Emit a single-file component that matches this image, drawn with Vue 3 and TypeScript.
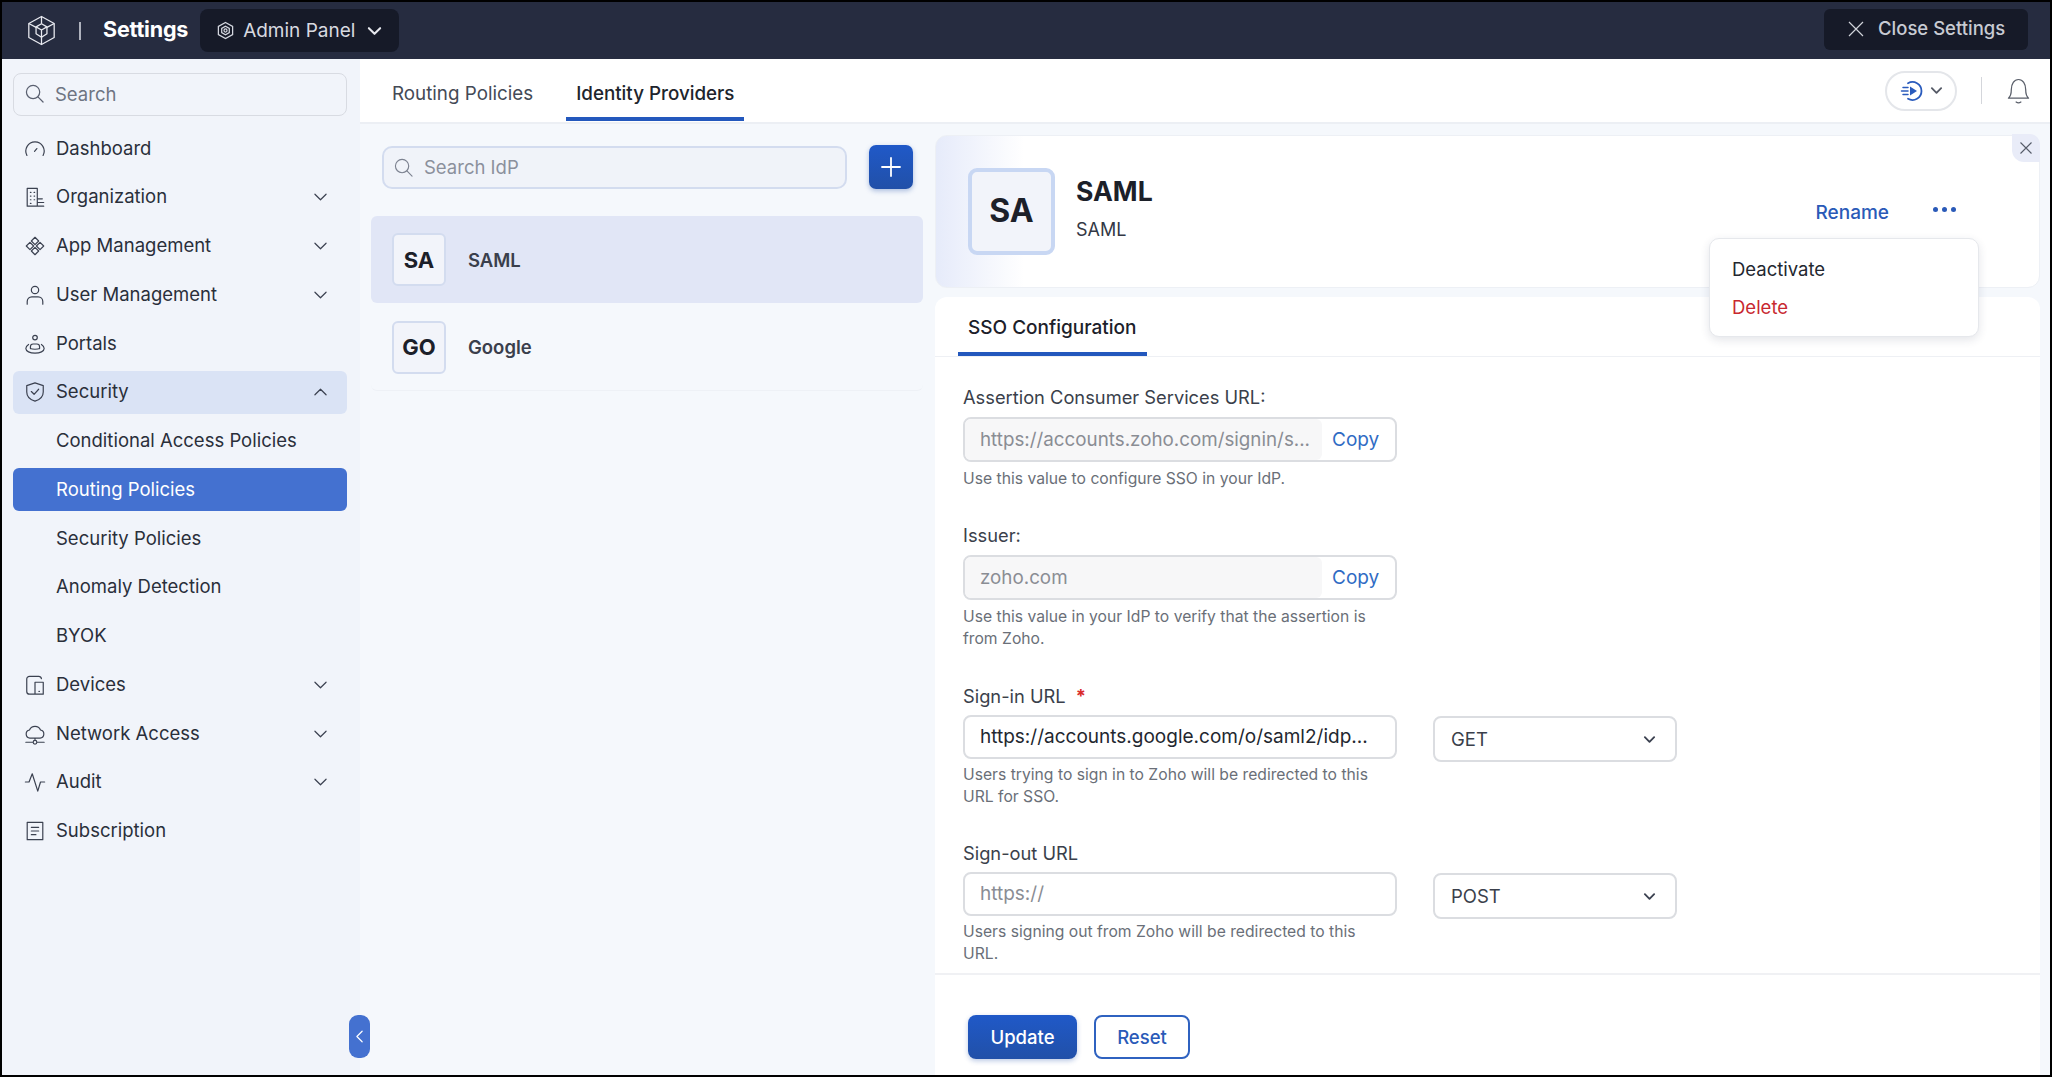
<template>
  <div class="frame">
    <header class="topbar">
      <svg class="logo" viewBox="0 0 32 34" fill="none" stroke="#e8eaf0" stroke-width="1.4" stroke-linejoin="round">
        <path d="M16 1.5 30 9.3V24.7L16 32.5 2 24.7V9.3Z" />
        <path d="M2 9.3 10 13.5M30 9.3 22 13.5M16 32.5V24.500M16 1.5V9.500" />
        <path d="M16 9.500 22 13V20.500L16 24.500 10 20.500V13Z" />
        <path d="M10 13 16 16.500 22 13M16 16.500V24.500" />
      </svg>
      <span class="bar-divider"></span>
      <span class="bar-title">Settings</span>
      <button class="admin-btn">
        <svg class="admin-icon" viewBox="0 0 20 20" fill="none" stroke="#d5d8e0" stroke-width="1.3">
          <path d="M10 1.5 17.5 5.7V14.3L10 18.5 2.5 14.3V5.7Z" />
          <path d="M10 5.500 14 7.800V12.200L10 14.500 6 12.200V7.800Z" />
          <circle cx="10" cy="10" r="1.600" />
        </svg>
        <span>Admin Panel</span>
        <svg class="admin-chev" viewBox="0 0 16 10" fill="none" stroke="#e6e8ee" stroke-width="2.2" stroke-linecap="round" stroke-linejoin="round">
          <path d="M2 2 8 8 14 2" />
        </svg>
      </button>
      <button class="close-btn">
        <svg viewBox="0 0 16 16" fill="none" stroke="#d0d3da" stroke-width="1.2"><path d="M1 1 15 15M15 1 1 15" /></svg>
        <span>Close Settings</span>
      </button>
    </header>

    <div class="body">
      <aside class="sidebar">
        <div class="side-search">
          <svg class="search-icon" viewBox="0 0 20 20" fill="none" stroke="#5a6070" stroke-width="1.3" stroke-linecap="round">
            <circle cx="8.5" cy="8.5" r="7" /><path d="M13.6 13.6 19 19" />
          </svg>
          <span>Search</span>
        </div>
        <nav class="nav">
          <div v-for="item in navItems" :key="item.label" class="nav-item" :class="{ open: item.open, active: item.active }">
            <svg v-if="item.icon" class="nav-icon" viewBox="0 0 24 24" fill="none" stroke="#3b4150" stroke-width="1.3" stroke-linecap="round" stroke-linejoin="round">
              <path :d="item.icon" />
            </svg>
            <span class="nav-label" :class="{ sub: !item.icon }">{{ item.label }}</span>
            <svg v-if="item.chevron" class="nav-chev" viewBox="0 0 14 8" fill="none" stroke="#3b4150" stroke-width="1.3" stroke-linecap="round" stroke-linejoin="round">
              <path :d="item.open ? 'M1 7 7 1 13 7' : 'M1 1 7 7 13 1'" />
            </svg>
          </div>
        </nav>
      </aside>
      <button class="collapse">
        <svg viewBox="0 0 8 14" fill="none" stroke="#fff" stroke-width="1.4" stroke-linecap="round" stroke-linejoin="round"><path d="M7 1 1 7 7 13" /></svg>
      </button>

      <main class="main">
        <div class="tabbar">
          <span class="tab">Routing Policies</span>
          <span class="tab current">Identity Providers</span>
          <div class="tab-tools">
            <div class="pill">
              <svg class="pill-play" viewBox="0 0 24 24" fill="none" stroke="#2a5bbd" stroke-width="1.8" stroke-linecap="round">
                <path d="M8 4.2A9 9 0 1 1 8 19.8" />
                <path d="M10 7.5 17 12 10 16.5Z" fill="#2a5bbd" stroke="none" />
                <path d="M3 8.5H8M1.5 12H8M3 15.5H8" stroke-width="1.5" />
              </svg>
              <svg class="pill-chev" viewBox="0 0 14 9" fill="none" stroke="#555a66" stroke-width="2" stroke-linecap="round" stroke-linejoin="round"><path d="M2 2 7 7 12 2" /></svg>
            </div>
            <span class="tool-divider"></span>
            <svg class="bell" viewBox="0 0 24 27" fill="none" stroke="#5a5f6a" stroke-width="1.3" stroke-linecap="round" stroke-linejoin="round">
              <path d="M1.5 21C4 19 4.5 17 4.5 12 4.5 6 7.5 1.5 12 1.5S19.5 6 19.5 12C19.5 17 20 19 22.5 21Z" />
              <path d="M9.5 25C11 26 13 26 14.5 25" />
            </svg>
          </div>
        </div>

        <div class="columns">
          <section class="idp-list">
            <div class="idp-tools">
              <div class="idp-search">
                <svg class="search-icon" viewBox="0 0 20 20" fill="none" stroke="#7c8290" stroke-width="1.2" stroke-linecap="round">
                  <circle cx="8.5" cy="8.5" r="7" /><path d="M13.6 13.6 19 19" />
                </svg>
                <span>Search IdP</span>
              </div>
              <button class="add-btn">
                <svg viewBox="0 0 20 20" fill="none" stroke="#fff" stroke-width="1.8" stroke-linecap="round"><path d="M10 1V19M1 10H19" /></svg>
              </button>
            </div>
            <div v-for="idp in idps" :key="idp.name" class="idp-row" :class="{ selected: idp.selected }">
              <span class="idp-badge">{{ idp.short }}</span>
              <span class="idp-name">{{ idp.name }}</span>
            </div>
          </section>

          <section class="detail">
            <div class="detail-head">
              <span class="big-badge">SA</span>
              <div class="head-text">
                <div class="head-title">SAML</div>
                <div class="head-sub">SAML</div>
              </div>
              <span class="rename">Rename</span>
              <span class="dots"><i></i><i></i><i></i></span>
              <button class="head-close">
                <svg viewBox="0 0 12 12" fill="none" stroke="#555b68" stroke-width="1.1"><path d="M0.5 0.5 11.5 11.5M11.5 0.5 0.5 11.5" /></svg>
              </button>
              <div class="menu">
                <div class="menu-item">Deactivate</div>
                <div class="menu-item danger">Delete</div>
              </div>
            </div>

            <div class="detail-card">
              <div class="card-tabs"><span class="card-tab">SSO Configuration</span></div>
              <div class="form">
                <div class="field f-acs">
                  <label>Assertion Consumer Services URL:</label>
                  <div class="ro-input">
                    <span class="ro-value">https://accounts.zoho.com/signin/s...</span>
                    <span class="copy">Copy</span>
                  </div>
                  <p class="help">Use this value to configure SSO in your IdP.</p>
                </div>
                <div class="field f-issuer">
                  <label>Issuer:</label>
                  <div class="ro-input">
                    <span class="ro-value">zoho.com</span>
                    <span class="copy">Copy</span>
                  </div>
                  <p class="help">Use this value in your IdP to verify that the assertion is from Zoho.</p>
                </div>
                <div class="field f-signin">
                  <label>Sign-in URL <em>*</em></label>
                  <div class="input-row">
                    <div class="text-input">https://accounts.google.com/o/saml2/idp...</div>
                    <div class="select">
                      <span>GET</span>
                      <svg viewBox="0 0 14 9" fill="none" stroke="#3b4150" stroke-width="2" stroke-linecap="round" stroke-linejoin="round"><path d="M2 2 7 7 12 2" /></svg>
                    </div>
                  </div>
                  <p class="help">Users trying to sign in to Zoho will be redirected to this URL for SSO.</p>
                </div>
                <div class="field f-signout">
                  <label>Sign-out URL</label>
                  <div class="input-row">
                    <div class="text-input empty">https://</div>
                    <div class="select">
                      <span>POST</span>
                      <svg viewBox="0 0 14 9" fill="none" stroke="#3b4150" stroke-width="2" stroke-linecap="round" stroke-linejoin="round"><path d="M2 2 7 7 12 2" /></svg>
                    </div>
                  </div>
                  <p class="help">Users signing out from Zoho will be redirected to this URL.</p>
                </div>
              </div>
              <div class="form-actions">
                <button class="btn-primary">Update</button>
                <button class="btn-ghost">Reset</button>
              </div>
            </div>
          </section>
        </div>
      </main>
    </div>
  </div>
</template>

<script setup lang="ts">
interface NavItem {
  label: string
  icon?: string
  chevron?: boolean
  open?: boolean
  active?: boolean
}

const navItems: NavItem[] = [
  { label: 'Dashboard', icon: 'M3.2 19A10 10 0 1 1 20.8 19M11.5 14.5 14 11.5' },
  { label: 'Organization', icon: 'M3.5 22V2.5H14.5V22ZM7 7H7.6M11 7H11.6M7 11H7.6M11 11H11.6M7 15H7.6M11 15H11.6M7 19H7.6M14.5 14H20M14.5 18H21.5M3.5 22H21.5', chevron: true },
  { label: 'App Management', icon: 'M12 2.5 16 6.5 12 10.5 8 6.5ZM12 13.5 16 17.5 12 21.5 8 17.5ZM6.5 8 10.5 12 6.5 16 2.5 12ZM17.5 8 21.5 12 17.5 16 13.5 12Z', chevron: true },
  { label: 'User Management', icon: 'M12 2.5A4 4 0 1 1 12 10.5 4 4 0 1 1 12 2.5ZM3.5 22V19A5 5 0 0 1 8.5 14H15.5A5 5 0 0 1 20.5 19V22', chevron: true },
  { label: 'Portals', icon: 'M12 2.5A2.5 2.5 0 1 1 12 7.5 2.5 2.5 0 1 1 12 2.5ZM7 17V15A3 3 0 0 1 10 12H14A3 3 0 0 1 17 15V17M5 12.5C2.5 14 2 15.5 2 17 2 20 6.5 22 12 22S22 20 22 17C22 15.5 21.5 14 19 12.5M7 17C9 18 15 18 17 17' },
  { label: 'Security', icon: 'M12 2 21 5V12C21 17 17 20.5 12 22 7 20.5 3 17 3 12V5ZM8 11.5 11 14.5 16 9', chevron: true, open: true },
  { label: 'Conditional Access Policies' },
  { label: 'Routing Policies', active: true },
  { label: 'Security Policies' },
  { label: 'Anomaly Detection' },
  { label: 'BYOK' },
  { label: 'Devices', icon: 'M16 2.5H6A3 3 0 0 0 3 5.5V19A3 3 0 0 0 6 22H21V9H12V22M16 2.5A3 3 0 0 1 19 5M16.3 19H16.8', chevron: true },
  { label: 'Network Access', icon: 'M6.5 16.5A4.5 4.5 0 0 1 6 7.6 6.5 6.5 0 0 1 18 7.6 4.5 4.5 0 0 1 17.5 16.5ZM12 16.5V19M2 21H10M14 21H22M10 21A2 2 0 0 0 14 21 2 2 0 0 0 10 21', chevron: true },
  { label: 'Audit', icon: 'M1.5 12H5.5L9 3 15 22 18 12H22.5', chevron: true },
  { label: 'Subscription', icon: 'M3.5 2.5H20.5V21.5H3.5ZM8 8H16M8 12H16M8 16H13' }
]

const idps = [
  { short: 'SA', name: 'SAML', selected: true },
  { short: 'GO', name: 'Google', selected: false }
]
</script>

<style>
html,
body {
  margin: 0;
  background: #000;
}
</style>

<style scoped>
.frame {
  width: 2052px;
  height: 1077px;
  box-sizing: border-box;
  padding: 2px;
  background: #000;
  display: flex;
  flex-direction: column;
  font-family: Inter, "Noto Sans", sans-serif;
  color: #23272f;
  overflow: hidden;
}

button {
  font-family: inherit;
  border: none;
  padding: 0;
  cursor: pointer;
}

/* top bar */
.topbar {
  height: 57px;
  flex: none;
  background: #262c40;
  display: flex;
  align-items: center;
  padding-left: 25px;
  padding-right: 22px;
}

.logo {
  width: 29px;
  height: 31px;
}

.bar-divider {
  width: 2px;
  height: 18px;
  background: #aeb2bd;
  margin-left: 23px;
}

.bar-title {
  margin-left: 22px;
  margin-top: -3px;
  color: #fff;
  font-size: 21.5px;
  font-weight: 700;
  letter-spacing: -0.2px;
}

.admin-btn {
  margin-left: 12px;
  width: 199px;
  height: 43px;
  background: #161a28;
  border-radius: 8px;
  color: #d8dae0;
  font-size: 19px;
  display: flex;
  align-items: center;
  padding-left: 16px;
}

.admin-icon {
  width: 19px;
  height: 19px;
  margin-right: 8px;
}

.admin-chev {
  width: 15px;
  height: 10px;
  margin-left: 12px;
}

.close-btn {
  margin-left: auto;
  width: 204px;
  height: 41px;
  background: #161a28;
  border-radius: 6px;
  color: #c8cbd3;
  font-size: 18.5px;
  font-weight: 500;
  display: flex;
  align-items: center;
  padding-left: 24px;
  padding-bottom: 3px;
  box-sizing: border-box;
  gap: 14px;
  margin-top: -3px;
}

.close-btn svg {
  width: 16px;
  height: 16px;
  margin-top: 2px;
}

.body {
  flex: 1;
  display: flex;
  min-height: 0;
  position: relative;
}

/* sidebar */
.sidebar {
  width: 358px;
  flex: none;
  background: #f1f4fa;
  box-sizing: border-box;
  padding: 14px 13px 0 11px;
}

.side-search {
  height: 43px;
  box-sizing: border-box;
  border: 1px solid #d8dbe2;
  border-radius: 8px;
  display: flex;
  align-items: center;
  padding-left: 11px;
  padding-bottom: 2px;
  color: #6e7482;
  font-size: 18.5px;
}

.search-icon {
  width: 19px;
  height: 19px;
  flex: none;
  margin-right: 11px;
}

.nav {
  margin-top: 11px;
  display: flex;
  flex-direction: column;
  gap: 5.75px;
}

.nav-item {
  height: 43px;
  border-radius: 6px;
  display: flex;
  align-items: center;
  padding-left: 11px;
  font-size: 18.5px;
  color: #2a2f3a;
}

.nav-item.open {
  background: #dae3f5;
}

.nav-item.active {
  background: #4471d0;
  color: #fff;
}

.nav-icon {
  width: 22px;
  height: 22px;
  flex: none;
  margin-right: 10px;
}

.nav-label {
  margin-top: -2px;
}

.nav-label.sub {
  margin-left: 32px;
}

.nav-chev {
  width: 13px;
  height: 8px;
  margin-left: auto;
  margin-right: 20px;
}

.collapse {
  position: absolute;
  left: 347px;
  top: 956px;
  width: 21px;
  height: 43px;
  border-radius: 9px;
  background: #4471d0;
  display: flex;
  align-items: center;
  justify-content: center;
}

.collapse svg {
  width: 7px;
  height: 13px;
}

/* main */
.main {
  flex: 1;
  min-width: 0;
  display: flex;
  flex-direction: column;
}

.tabbar {
  height: 65px;
  flex: none;
  box-sizing: border-box;
  background: #fff;
  border-bottom: 2px solid #eceff4;
  display: flex;
  padding-left: 22px;
}

.tab {
  height: 62px;
  box-sizing: border-box;
  padding: 6px 10px 0;
  margin-right: 23px;
  display: flex;
  align-items: center;
  font-size: 18.8px;
  color: #444a56;
}

.tab.current {
  color: #20242c;
  font-weight: 500;
  border-bottom: 4px solid #2358bd;
  padding-top: 10px;
}

.tab-tools {
  margin-left: auto;
  display: flex;
  align-items: center;
  padding-right: 20px;
}

.pill {
  width: 72px;
  height: 40px;
  box-sizing: border-box;
  border: 2px solid #e4e6ea;
  border-radius: 20px;
  display: flex;
  align-items: center;
  justify-content: center;
  gap: 6px;
}

.pill-play {
  width: 24px;
  height: 24px;
}

.pill-chev {
  width: 13px;
  height: 9px;
}

.tool-divider {
  width: 1px;
  height: 27px;
  background: #d4d6db;
  margin: 0 25px 0 24px;
}

.bell {
  width: 23px;
  height: 26px;
}

.columns {
  flex: 1;
  min-height: 0;
  display: flex;
  background: #f5f8fc;
}

/* idp list */
.idp-list {
  width: 574px;
  flex: none;
  box-sizing: border-box;
  padding: 21px 11px 0;
}

.idp-tools {
  display: flex;
  align-items: center;
  padding-left: 11px;
  margin-bottom: 27px;
}

.idp-search {
  width: 465px;
  height: 43px;
  box-sizing: border-box;
  border: 2px solid #d3dcef;
  background: #f0f3f9;
  border-radius: 10px;
  display: flex;
  align-items: center;
  padding-left: 10px;
  color: #8b909c;
  font-size: 18.5px;
}

.add-btn {
  width: 44px;
  height: 44px;
  margin-left: 22px;
  border-radius: 7px;
  background: linear-gradient(#2059c8, #2150a8);
  box-shadow: 0 2px 5px rgba(33, 80, 168, 0.35);
  display: flex;
  align-items: center;
  justify-content: center;
}

.add-btn svg {
  width: 20px;
  height: 20px;
}

.idp-row {
  height: 87px;
  display: flex;
  align-items: center;
  padding-left: 21px;
  border-radius: 6px;
  border-bottom: 1px solid #eef1f6;
  box-sizing: border-box;
}

.idp-row.selected {
  background: #e1e6f6;
  border-bottom: none;
  margin-bottom: 1px;
}

.idp-badge {
  width: 54px;
  height: 53px;
  box-sizing: border-box;
  border: 2px solid #d3dcef;
  border-radius: 6px;
  background: #f2f4fa;
  color: #1c2029;
  font-size: 22px;
  font-weight: 700;
  display: flex;
  align-items: center;
  justify-content: center;
}

.idp-name {
  margin-left: 22px;
  font-size: 18.5px;
  font-weight: 600;
  color: #3a3f4c;
}

/* detail */
.detail {
  width: 1105px;
  flex: none;
  margin-left: 1px;
  padding-top: 11px;
  display: flex;
  flex-direction: column;
}

.detail-head {
  height: 153px;
  flex: none;
  position: relative;
  box-sizing: border-box;
  border: 1px solid #edf0f5;
  border-radius: 12px;
  background: linear-gradient(90deg, #e6ebfa, #fff 8%);
  display: flex;
  align-items: center;
  padding: 0 0 0 32px;
}

.big-badge {
  width: 87px;
  height: 87px;
  margin-top: -1px;
  padding-bottom: 2px;
  box-sizing: border-box;
  border: 4px solid #c8d7f3;
  border-radius: 9px;
  background: #f2f4fa;
  color: #1c2029;
  font-size: 32px;
  font-weight: 700;
  display: flex;
  align-items: center;
  justify-content: center;
}

.head-text {
  margin-left: 21px;
  margin-top: -7px;
}

.head-title {
  font-size: 26.6px;
  font-weight: 700;
  color: #1c2029;
  margin-top: -2px;
}

.head-sub {
  margin-top: 12px;
  font-size: 18px;
  color: #333845;
}

.rename {
  margin-left: auto;
  color: #2a5ab8;
  font-size: 19px;
  font-weight: 500;
  margin-top: 2px;
}

.dots {
  margin: -4px 83px 0 44px;
  display: flex;
  gap: 4px;
}

.dots i {
  width: 5px;
  height: 5px;
  border-radius: 50%;
  background: #2a5ab8;
}

.head-close {
  position: absolute;
  top: -2px;
  right: -1px;
  width: 28px;
  height: 28px;
  background: #e9ecf8;
  border-radius: 0 10px 0 12px;
  display: flex;
  align-items: center;
  justify-content: center;
}

.head-close svg {
  width: 12px;
  height: 12px;
}

.menu {
  position: absolute;
  left: 773px;
  top: 102px;
  width: 270px;
  height: 99px;
  box-sizing: border-box;
  padding: 18px 22px;
  background: #fff;
  border: 1px solid #e6e8ec;
  border-radius: 10px;
  box-shadow: 0 3px 10px rgba(30, 40, 70, 0.12);
  z-index: 2;
}

.menu-item {
  height: 38px;
  line-height: 25px;
  font-size: 18.5px;
  color: #23272f;
}

.menu-item.danger {
  color: #c8282f;
}

.detail-card {
  flex: 1;
  min-height: 0;
  margin-top: 9px;
  background: #fff;
  border-radius: 12px 12px 0 0;
  display: flex;
  flex-direction: column;
}

.card-tabs {
  height: 60px;
  flex: none;
  box-sizing: border-box;
  border-bottom: 1px solid #eef0f4;
  padding-left: 23px;
}

.card-tab {
  height: 59px;
  box-sizing: border-box;
  display: inline-flex;
  align-items: center;
  padding: 6px 10px 0;
  font-size: 19px;
  font-weight: 500;
  color: #1c2029;
  border-bottom: 4px solid #2358bd;
}

.form {
  padding: 28px 0 0 28px;
}

.field label {
  display: block;
  height: 24px;
  line-height: 24px;
  font-size: 18.3px;
  color: #3a3f4b;
}

.field label em {
  color: #d92a2a;
  font-style: normal;
  font-weight: 700;
  margin-left: 5px;
}

.ro-input {
  margin-top: 8px;
  width: 434px;
  height: 45px;
  box-sizing: border-box;
  border: 2px solid #dbdde1;
  border-radius: 8px;
  display: flex;
  align-items: center;
  overflow: hidden;
}

.ro-value {
  width: 357px;
  height: 100%;
  flex: none;
  box-sizing: border-box;
  padding-left: 15px;
  background: #f7f7f8;
  color: #8a8d94;
  font-size: 18.8px;
  line-height: 41px;
  white-space: nowrap;
  overflow: hidden;
  border-radius: 0 6px 6px 0;
}

.copy {
  margin-left: 10px;
  color: #2f6bc4;
  font-size: 19px;
}

.help {
  margin: 6px 0 0;
  width: 425px;
  font-size: 15.7px;
  line-height: 22px;
  color: #6a6f78;
}

.f-issuer {
  margin-top: 33px;
}

.f-signin {
  margin-top: 34px;
}

.f-signout {
  margin-top: 33px;
}

.input-row {
  margin-top: 7px;
  display: flex;
}

.text-input {
  width: 434px;
  height: 44px;
  box-sizing: border-box;
  border: 2px solid #dbdde1;
  border-radius: 8px;
  padding-left: 15px;
  font-size: 19px;
  line-height: 40px;
  color: #23272f;
  white-space: nowrap;
  overflow: hidden;
}

.text-input.empty {
  color: #8a8d94;
}

.select {
  margin-left: 36px;
  margin-top: 1px;
  width: 244px;
  height: 46px;
  box-sizing: border-box;
  border: 2px solid #dbdde1;
  border-radius: 8px;
  display: flex;
  align-items: center;
  justify-content: space-between;
  padding: 0 19px 0 16px;
  font-size: 18.5px;
  color: #3a3f4b;
}

.select svg {
  width: 13px;
  height: 9px;
}

.input-row + .help {
  margin-top: 2px;
}

.form-actions {
  margin-top: 8px;
  flex: 1;
  border-top: 2px solid #f0f1f4;
  display: flex;
  align-items: flex-start;
  gap: 17px;
  padding: 40px 0 0 33px;
}

.btn-primary,
.btn-ghost {
  height: 44px;
  border-radius: 8px;
  font-size: 18.5px;
  font-weight: 500;
}

.btn-primary {
  width: 109px;
  color: #fff;
  background: linear-gradient(#2059c8, #2150a8);
  box-shadow: 0 2px 5px rgba(33, 80, 168, 0.3);
}

.btn-ghost {
  width: 96px;
  color: #2a5ab8;
  background: #fff;
  border: 2px solid #2f62c0;
}
</style>
